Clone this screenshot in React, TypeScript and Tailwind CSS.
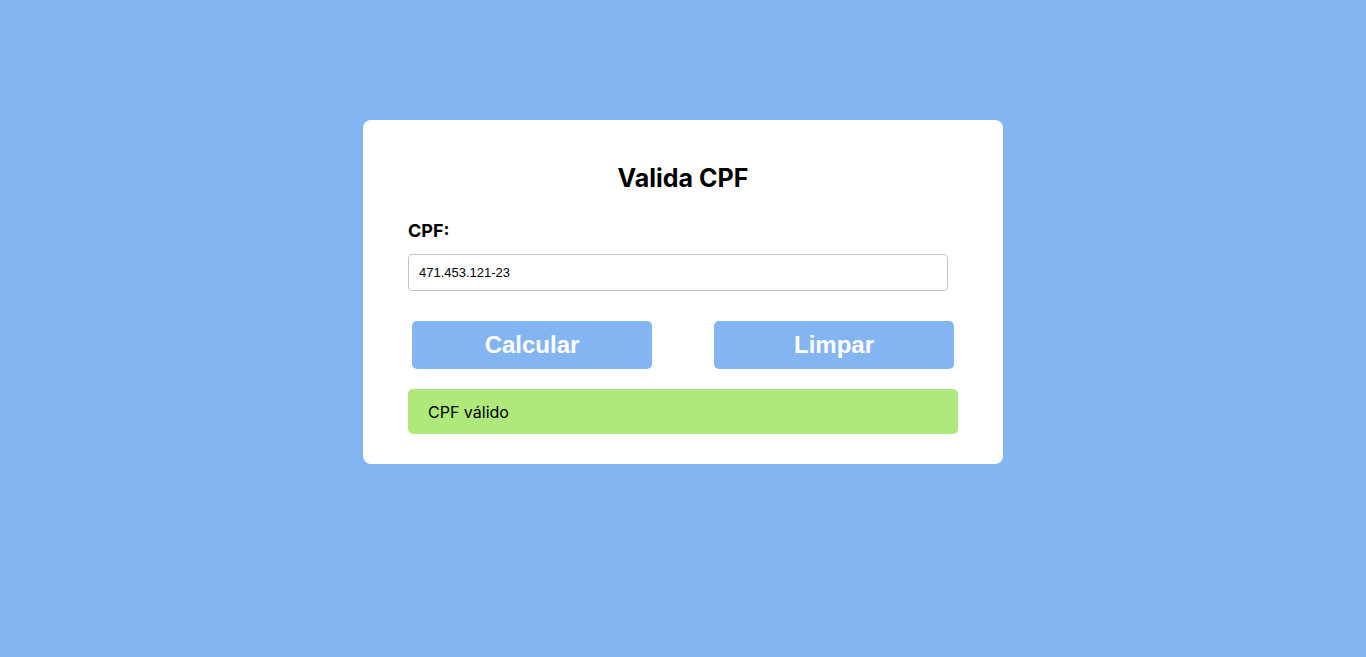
import { useState } from 'react'

const App = () => {
  const [cpf, setCpf] = useState('471.453.121-23')

  return (
    <div className="min-h-screen w-full bg-[#84b5f3] pt-[120px] font-['Inter','Noto_Sans',sans-serif]">
      <div className="mx-auto w-[640px] rounded-lg bg-white px-[45px] pt-[40px] pb-[30px]">
        <h1 className="text-center text-[25px] leading-[36px] font-bold text-black">Valida CPF</h1>
        <label className="mt-[21px] block text-[18px] leading-[27px] font-bold text-black">CPF:</label>
        <input
          type="text"
          value={cpf}
          onChange={(e) => setCpf(e.target.value)}
          className="mt-[10px] block h-[37px] w-[540px] rounded border border-[#c4c4c4] px-[10px] text-[13px] text-black outline-none font-['Liberation_Sans',Arial,sans-serif]"
        />
        <div className="mt-[30px] flex justify-between px-[4px]">
          <button className="h-[48px] w-[240px] rounded-[5px] bg-[#84b5f3] text-[24px] font-bold text-white font-['Liberation_Sans',Arial,sans-serif]">
            Calcular
          </button>
          <button className="h-[48px] w-[240px] rounded-[5px] bg-[#84b5f3] text-[24px] font-bold text-white font-['Liberation_Sans',Arial,sans-serif]">
            Limpar
          </button>
        </div>
        <div className="mt-[20px] flex h-[45px] w-[550px] items-center rounded-[5px] bg-[#afe97c] px-[20px] text-[16px] text-black">
          CPF válido
        </div>
      </div>
    </div>
  )
}

export default App
